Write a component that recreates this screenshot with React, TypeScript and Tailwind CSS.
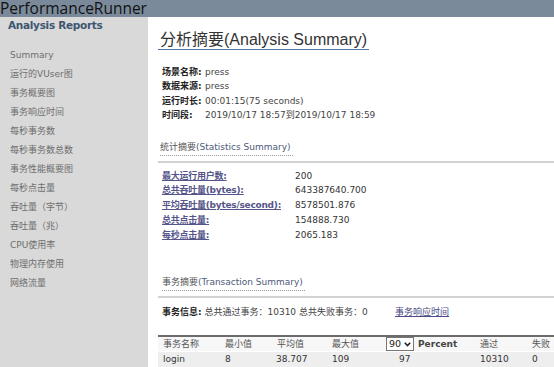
import React from "react";

const small = "font-['DejaVu_Sans','Noto_Sans_CJK_SC',sans-serif]";

const navItems = [
  "运行的VUser图",
  "事务概要图",
  "事务响应时间",
  "每秒事务数",
  "每秒事务数总数",
  "事务性能概要图",
  "每秒点击量",
  "吞吐量（字节）",
  "吞吐量（兆）",
  "CPU使用率",
  "物理内存使用",
  "网络流量",
];

const info = [
  ["场景名称:", "press"],
  ["数据来源:", "press"],
  ["运行时长:", "00:01:15(75 seconds)"],
  ["时间段:", "2019/10/17 18:57到2019/10/17 18:59"],
];

const stats = [
  ["最大运行用户数:", "200"],
  ["总共吞吐量(bytes):", "643387640.700"],
  ["平均吞吐量(bytes/second):", "8578501.876"],
  ["总共点击量:", "154888.730"],
  ["每秒点击量:", "2065.183"],
];

function SectionTitle({ cn, en }: { cn: string; en: string }) {
  return (
    <div className="pl-[2px]">
      <span className="inline-block leading-[13px] pb-[1px] border-b border-dotted border-[#9a9a9a] pr-[2px]">
        <span className="text-[#555]">{cn}</span>
        <span className="text-[#4d5a7a]">{en}</span>
      </span>
    </div>
  );
}

export default function App() {
  return (
    <div className={`w-[554px] h-[367px] overflow-hidden bg-white ${small} text-[9px]`}>
      <div className="relative z-10 h-[17px] bg-[#7b8a9b]">
        <div className="font-['Open_Sans',sans-serif] text-[15.5px] leading-[17px] text-[#111] whitespace-nowrap">
          PerformanceRunner
        </div>
      </div>
      <div className="flex h-[350px]">
        <div className="w-[148px] bg-[#d9d9d9] shrink-0">
          <div className="pl-[8px] pt-[2px] leading-[13px] text-[10.5px] font-bold tracking-[-0.3px] text-[#3d5570]">
            Analysis Reports
          </div>
          <div className="pl-[10px] pt-[14px] text-[#6e6e6e] leading-[19px]">
            <div>Summary</div>
            {navItems.map((n) => (
              <div key={n}>{n}</div>
            ))}
          </div>
        </div>
        <div className="flex-1 pl-[10px] pt-[14px]">
          <div className="inline-block border-b-[1.5px] border-[#4f77a8] pl-[2px] pr-[2px] font-['Liberation_Sans','Noto_Sans_CJK_SC',sans-serif] text-[16px] leading-[18px] text-[#333]">
            分析摘要(Analysis Summary)
          </div>
          <div className="mt-[15px] pl-[4px] leading-[14.4px]">
            {info.map(([k, v]) => (
              <div key={k} className="flex">
                <span className="w-[43px] font-bold text-[#222]">{k}</span>
                <span className="text-[#444]">{v}</span>
              </div>
            ))}
          </div>
          <div className="mt-[18px]">
            <SectionTitle cn="统计摘要" en="(Statistics Summary)" />
          </div>
          <div className="mt-[5px] border-t-2 border-[#d2d2d2]" />
          <div className="mt-[6px] pl-[4px] leading-[14.75px]">
            {stats.map(([k, v]) => (
              <div key={k} className="flex">
                <span className="w-[133px]">
                  <span className="underline font-bold tracking-[-0.25px] text-[#55558a]">{k}</span>
                </span>
                <span className="text-[#333]">{v}</span>
              </div>
            ))}
          </div>
          <div className="mt-[34px] pl-[2px]">
            <SectionTitle cn="事务摘要" en="(Transaction Summary)" />
          </div>
          <div className="mt-[5px] border-t-2 border-[#d2d2d2]" />
          <div className="mt-[7px] pl-[4px] leading-[14px] flex">
            <span className="w-[233px]">
              <span className="font-bold text-[#222]">事务信息:</span>
              <span className="text-[#444]"> 总共通过事务：10310 总共失败事务：0</span>
            </span>
            <span className="underline text-[#4a4a86]">事务响应时间</span>
          </div>
          <div className="mt-[16px] border-t-2 border-[#6b6b6b]">
            <div className="grid grid-cols-[62px_52px_55px_55px_93px_52px_1fr] h-[14px] items-center bg-[#f7f7f7] text-[#555]">
              <div className="pl-[5px]">事务名称</div>
              <div className="pl-[5px]">最小值</div>
              <div className="pl-[5px]">平均值</div>
              <div className="pl-[5px]">最大值</div>
              <div className="flex items-center">
                <div className="ml-[4px] h-[14px] w-[28px] border border-[#777] bg-white flex items-center justify-between pl-[2px] pr-[2px] text-[#222] text-[9.5px]">
                  <span>90</span>
                  <svg width="7" height="5" viewBox="0 0 7 5">
                    <path d="M0.8 0.8 L3.5 3.6 L6.2 0.8" fill="none" stroke="#222" strokeWidth="1.6" />
                  </svg>
                </div>
                <span className="ml-[4px] font-bold text-[#444]">Percent</span>
              </div>
              <div className="pl-[5px]">通过</div>
              <div className="pl-[5px]">失败</div>
            </div>
            <div className="grid grid-cols-[62px_52px_55px_55px_93px_52px_1fr] h-[15px] items-center bg-[#eeeeee] text-[#333] mt-[1px]">
              <div className="pl-[5px]">login</div>
              <div className="pl-[5px]">8</div>
              <div className="pl-[4px]">38.707</div>
              <div className="pl-[5px]">109</div>
              <div className="pl-[17px]">97</div>
              <div className="pl-[5px]">10310</div>
              <div className="pl-[5px]">0</div>
            </div>
          </div>
        </div>
      </div>
    </div>
  );
}
